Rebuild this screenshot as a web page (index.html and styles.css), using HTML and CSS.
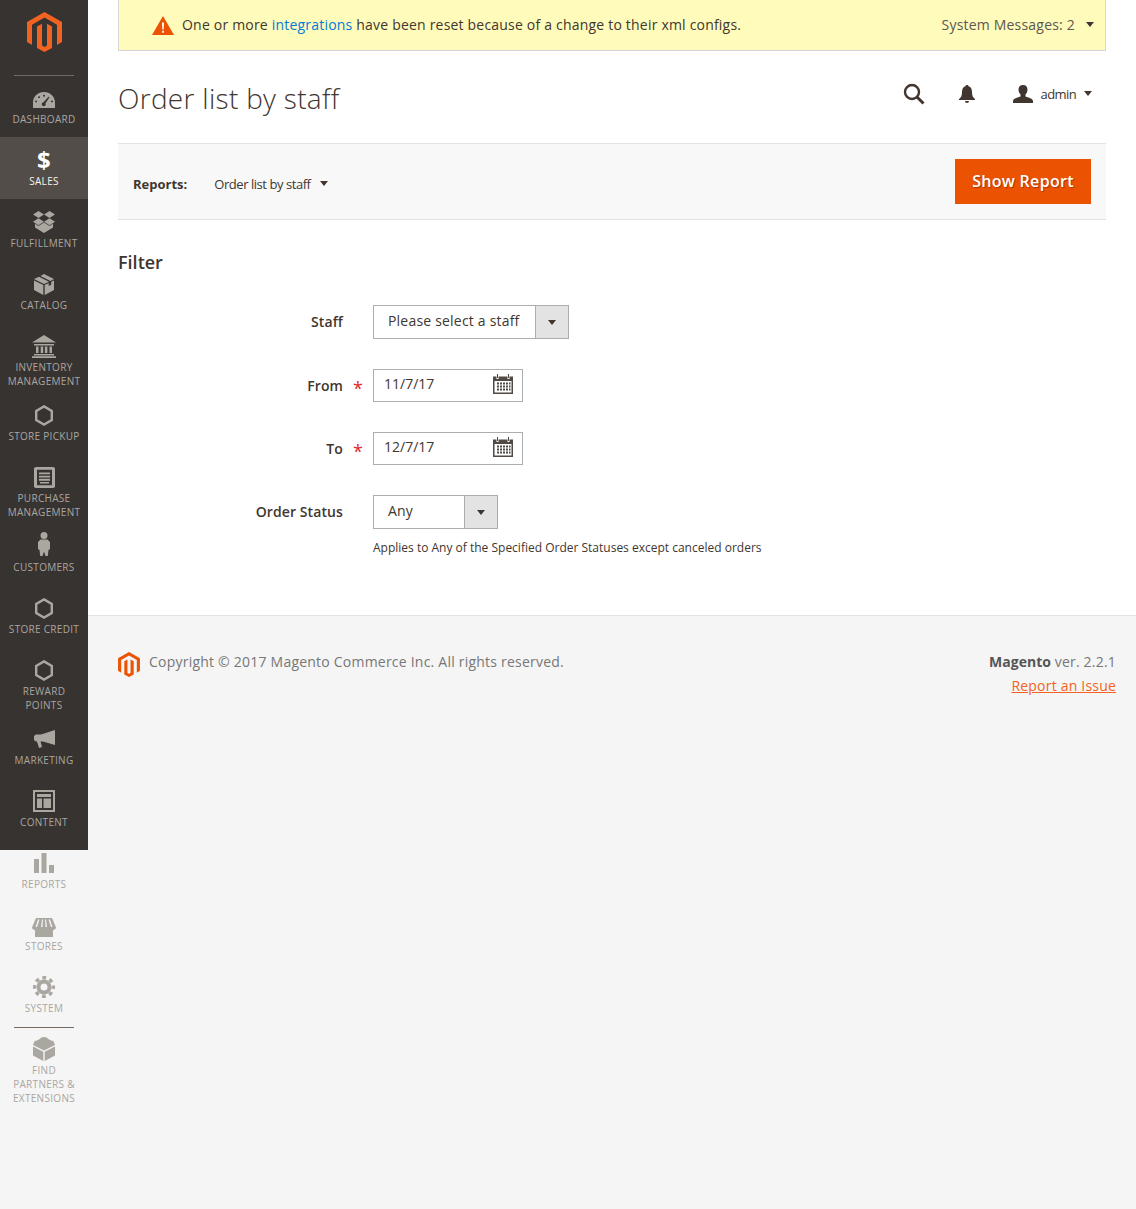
FILE: index.html
```html
<!DOCTYPE html>
<html>
<head>
  <title>Order list by staff</title>
  <link rel="stylesheet" href="styles.css">
</head>
<body>
  <div class="page">
    <aside class="sidebar">
      <a class="logo" href="#">
        <svg width="35" height="40" viewBox="0 0 35 40"><path fill="#f26322" d="M17.500 0 35 10v20l-5 3V12.800L17.500 5.600 5 12.800V33l-5-3V10zM10 14.600l5-2.800v21.600l2.500 1.500 2.500-1.500V11.800l5 2.800V36l-7.500 4-7.500-4z"/></svg>
      </a>
      <div class="nav-divider"></div>
      <nav class="nav">
        <a class="nav-item" href="#">
          <span class="nav-icon icon-dashboard"><svg width="22" height="16" viewBox="0 0 22 17" preserveAspectRatio="none"><path fill="currentColor" fill-rule="evenodd" d="M11 0C5 0 0 5 0 11v6h22v-6C22 5 17 0 11 0zM11 3a1 1 0 1 1 0 2 1 1 0 0 1 0-2zM6 4.500a1 1 0 1 1 0 2 1 1 0 0 1 0-2zM3 9a1 1 0 1 1 0 2 1 1 0 0 1 0-2zM19 9a1 1 0 1 1 0 2 1 1 0 0 1 0-2zM15.500 5l1 .7-4 6.300a2 2 0 1 1-2-1z"/></svg></span>
          <span class="nav-label">Dashboard</span>
        </a>
        <a class="nav-item is-active" href="#">
          <span class="nav-icon nav-dollar">$</span>
          <span class="nav-label">Sales</span>
        </a>
        <a class="nav-item" href="#">
          <span class="nav-icon"><svg width="22" height="22" viewBox="0 0 22 23" preserveAspectRatio="none"><path fill="currentColor" d="M5.500 0 11 3.600 5.500 7.200 0 3.600zM16.500 0 22 3.600l-5.500 3.600L11 3.600zM5.500 7.600 11 11.200l-5.500 3.600L0 11.200zM16.500 7.600l5.500 3.600-5.500 3.600-5.500-3.600zM11 12l5.500 3.600 3.500-2.200v3.800L11 23l-9-5.800v-3.800l3.500 2.200z"/></svg></span>
          <span class="nav-label">Fulfillment</span>
        </a>
        <a class="nav-item" href="#">
          <span class="nav-icon"><svg width="20" height="21" viewBox="0 0 20 21"><path fill="currentColor" d="M10 0 20 5 16.500 7 6.500 2zM5 2.800 15 7.800 10 10 0 5zM0 6.500 9.300 11v10L0 16zM20 6.500V16l-9.300 5V11l4-2v3l2.500-1.300v-3z"/></svg></span>
          <span class="nav-label">Catalog</span>
        </a>
        <a class="nav-item" href="#">
          <span class="nav-icon"><svg width="24" height="23" viewBox="0 0 24 23"><path fill="currentColor" d="M12 0 24 7.500H0zM2 9h20v1.500H2zM4 11.500h2.500V18H4zM8.700 11.500h2.500V18H8.700zM12.900 11.500h2.500V18h-2.500zM17.500 11.500H20V18h-2.500zM2 19h20v1.500H2zM0 21.200h24V23H0z"/></svg></span>
          <span class="nav-label">Inventory<br>Management</span>
        </a>
        <a class="nav-item" href="#">
          <span class="nav-icon"><svg width="18" height="21" viewBox="0 0 18 21"><path fill="none" stroke="currentColor" stroke-width="2.400" d="M9 1.400 16.800 5.900v9.200L9 19.600 1.200 15.100V5.900z"/></svg></span>
          <span class="nav-label">Store Pickup</span>
        </a>
        <a class="nav-item" href="#">
          <span class="nav-icon"><svg width="21" height="21" viewBox="0 0 21 23" preserveAspectRatio="none"><path fill="currentColor" fill-rule="evenodd" d="M2 0h17a2 2 0 0 1 2 2v19a2 2 0 0 1-2 2H2a2 2 0 0 1-2-2V2a2 2 0 0 1 2-2zM3 3v17h15V3zM5 6h11v2H5zM5 9.500h11v2H5zM5 13h11v2H5zM6 16.500h9v1.500H6z"/></svg></span>
          <span class="nav-label">Purchase<br>Management</span>
        </a>
        <a class="nav-item" href="#">
          <span class="nav-icon icon-customers"><svg width="12" height="24" viewBox="0 0 12 24"><path fill="currentColor" d="M6 0a3.500 3.500 0 1 1 0 7 3.500 3.500 0 0 1 0-7zM2.500 7.500h7L12 10v7l-1.500 1-.7 6H7.500L6 19.500 4.500 24H2.200l-.7-6L0 17v-7z"/></svg></span>
          <span class="nav-label">Customers</span>
        </a>
        <a class="nav-item" href="#">
          <span class="nav-icon"><svg width="18" height="21" viewBox="0 0 18 21"><path fill="none" stroke="currentColor" stroke-width="2.400" d="M9 1.400 16.800 5.900v9.200L9 19.600 1.200 15.100V5.900z"/></svg></span>
          <span class="nav-label">Store Credit</span>
        </a>
        <a class="nav-item" href="#">
          <span class="nav-icon"><svg width="18" height="21" viewBox="0 0 18 21"><path fill="none" stroke="currentColor" stroke-width="2.400" d="M9 1.400 16.800 5.900v9.200L9 19.600 1.200 15.100V5.900z"/></svg></span>
          <span class="nav-label">Reward<br>Points</span>
        </a>
        <a class="nav-item" href="#">
          <span class="nav-icon"><svg width="21" height="18" viewBox="0 0 21 18"><path fill="currentColor" d="M21 0v15L9 11.500H6.500L8 17l-3 1-2-6.500H2L0 10V6l2-1.500h5z"/></svg></span>
          <span class="nav-label">Marketing</span>
        </a>
        <a class="nav-item" href="#">
          <span class="nav-icon"><svg width="22" height="22" viewBox="0 0 22 22"><path fill="currentColor" fill-rule="evenodd" d="M0 0h22v22H0zM2 2v18h18V2zM4 4h14v3H4zM4 8.500h5V18H4zM10.500 8.500H18V18h-7.500z"/></svg></span>
          <span class="nav-label">Content</span>
        </a>
        <a class="nav-item" href="#">
          <span class="nav-icon"><svg width="20" height="20" viewBox="0 0 20 20"><path fill="currentColor" d="M0 6h5v14H0zM7.500 0h5v20h-5zM15 12h5v8h-5z"/></svg></span>
          <span class="nav-label">Reports</span>
        </a>
        <a class="nav-item" href="#">
          <span class="nav-icon icon-stores"><svg width="24" height="19" viewBox="0 0 24 19"><path fill="currentColor" fill-rule="evenodd" d="M4 0h16l4 9.500c0 1.500-1.500 2.500-3 2.500v7H3v-7c-1.500 0-3-1-3-2.500zM6 1.500 3.500 9H5l2.500-7.500zM10 1.500 9 9h1.500l.5-7.500zM13 1.500l.5 7.500H15l-1-7.500zM16.500 1.500 19 9h1.500L18 1.500z"/></svg></span>
          <span class="nav-label">Stores</span>
        </a>
        <a class="nav-item" href="#">
          <span class="nav-icon"><svg width="22" height="22" viewBox="0 0 22 22"><circle cx="11" cy="11" r="5.500" fill="none" stroke="currentColor" stroke-width="4"/><circle cx="11" cy="11" r="9.300" fill="none" stroke="currentColor" stroke-width="3.400" stroke-dasharray="3.700 3.600" stroke-dashoffset="1.850"/></svg></span>
          <span class="nav-label">System</span>
        </a>
        <div class="nav-divider"></div>
        <a class="nav-item" href="#">
          <span class="nav-icon"><svg width="22" height="24" viewBox="0 0 22 24"><path fill="currentColor" d="M11 0c2 0 3.500 .7 3.800 1.800L18 3.500c2 .3 3 1 3 2L22 8 11 13.500 0 8l1-2.500c0-1 1-1.700 3-2l3.200-1.700C7.500 .7 9 0 11 0zM0 9.500l10.300 5.200V24L0 18.500zM22 9.500v9L11.700 24v-9.300z"/></svg></span>
          <span class="nav-label nav-label-long">Find<br>Partners &amp;<br>Extensions</span>
        </a>
      </nav>
    </aside>

    <div class="content">
      <main class="main">
        <div class="message-bar">
          <svg class="warning-icon" width="22" height="19" viewBox="0 0 22 19"><path fill="#eb5202" d="M11 0 22 19H0z"/><path fill="#fff" d="M10 6.500h2l-.3 7h-1.400zM10.100 14.800h1.800v1.900h-1.800z"/></svg>
          <span class="message-text">One or more <a href="#">integrations</a> have been reset because of a change to their xml configs.</span>
          <span class="message-count">System Messages: 2</span>
          <span class="caret message-caret"></span>
        </div>

        <header class="page-header">
          <h1>Order list by staff</h1>
          <div class="header-actions">
            <svg class="search-icon" width="22" height="22" viewBox="0 0 22 22"><circle cx="9" cy="9" r="7" fill="none" stroke="#41362f" stroke-width="2.400"/><path stroke="#41362f" stroke-width="3" d="m14 14 6.500 6.500"/></svg>
            <svg class="bell-icon" width="16" height="18" viewBox="0 0 16 18"><path fill="#41362f" d="M8 0c1 0 1.500.6 1.600 1.300C12 2 13 4 13 7c0 4 1 5.500 3 7v1H0v-1c2-1.500 3-3 3-7 0-3 1-5 3.400-5.700C6.500.6 7 0 8 0zM6 16h4a2 2 0 0 1-4 0z"/></svg>
            <span class="user-menu">
              <svg width="20" height="18" viewBox="0 0 20 18"><path fill="#41362f" d="M10 0c3 0 4.500 2 4.500 4.500 0 2-1 4-2 5v2c3 1 7.500 2 7.500 4.500v2H0v-2c0-2.500 4.500-3.500 7.500-4.500v-2c-1-1-2-3-2-5C5.500 2 7 0 10 0z"/></svg>
              <span class="user-name">admin</span>
              <span class="caret"></span>
            </span>
          </div>
        </header>

        <div class="report-bar">
          <div class="report-switcher">
            <strong class="report-label">Reports:</strong>
            <span class="report-name">Order list by staff</span>
            <span class="caret"></span>
          </div>
          <button class="show-report" type="button">Show Report</button>
        </div>

        <section class="filter">
          <h2>Filter</h2>
          <div class="form-row">
            <label>Staff</label>
            <div class="select select-staff"><span class="select-value">Please select a staff</span><span class="select-arrow"><span class="caret"></span></span></div>
          </div>
          <div class="form-row is-required">
            <label>From</label>
            <div class="date-field"><input type="text" value="11/7/17"><svg width="20" height="20" viewBox="0 0 20 20"><use href="#calendar"/></svg></div>
          </div>
          <div class="form-row is-required">
            <label>To</label>
            <div class="date-field"><input type="text" value="12/7/17"><svg width="20" height="20" viewBox="0 0 20 20"><use href="#calendar"/></svg></div>
          </div>
          <div class="form-row">
            <label>Order Status</label>
            <div class="select select-status"><span class="select-value">Any</span><span class="select-arrow"><span class="caret"></span></span></div>
          </div>
          <p class="form-note">Applies to Any of the Specified Order Statuses except canceled orders</p>
        </section>
      </main>

      <footer class="footer">
        <div class="copyright">
          <svg width="22" height="25" viewBox="0 0 35 40"><path fill="#eb5202" d="M17.500 0 35 10v20l-5 3V12.800L17.500 5.600 5 12.800V33l-5-3V10zM10 14.600l5-2.800v21.600l2.500 1.500 2.500-1.500V11.800l5 2.800V36l-7.500 4-7.500-4z"/></svg>
          <span class="copyright-text">Copyright © 2017 Magento Commerce Inc. All rights reserved.</span>
        </div>
        <div class="version">
          <div><strong>Magento</strong> ver. 2.2.1</div>
          <a href="#">Report an Issue</a>
        </div>
      </footer>
    </div>
  </div>

  <svg class="sprites" width="0" height="0">
    <symbol id="calendar" viewBox="0 0 20 20">
      <path fill="#514943" fill-rule="evenodd" d="M0 2.500h3.500V5h2V2.500h9V5h2V2.500H20V20H0zM1.500 7v11.500h17V7zM4 0h1v4H4zM15 0h1v4h-1z"/>
      <path fill="#514943" d="M4 8.500h2v2H4zM7 8.500h2v2H7zM10 8.500h2v2h-2zM13 8.500h2v2h-2zM16 8.500h1.500v2H16zM4 11.500h2v2H4zM7 11.500h2v2H7zM10 11.500h2v2h-2zM13 11.500h2v2h-2zM16 11.500h1.500v2H16zM4 14.500h2v2H4zM7 14.500h2v2H7zM10 14.500h2v2h-2zM13 14.500h2v2h-2zM16 14.500h1.500v2H16z"/>
    </symbol>
  </svg>
</body>
</html>
```

FILE: styles.css
```css
* {
  box-sizing: border-box;
}

body {
  margin: 0;
  background-color: #f5f5f5;
  color: #41362f;
  font-family: "Open Sans", sans-serif;
  font-size: 14px;
  letter-spacing: .2px;
}

a {
  text-decoration: none;
}

.page {
  display: flex;
  align-items: flex-start;
  min-height: 1209px;
}

/* sidebar */
.sidebar {
  flex: none;
  width: 88px;
  height: 850px;
  background-color: #373330;
}

.logo {
  display: flex;
  justify-content: center;
  height: 75px;
  padding-top: 12px;
}

.nav-divider {
  height: 1px;
  margin: 0 14px -1px;
  background-color: #736963;
  position: relative;
}

.nav .nav-divider {
  margin-top: 1px;
  margin-bottom: -2px;
}

.nav-item {
  display: block;
  padding: 12px 4px 4px;
  color: #aaa6a0;
  text-align: center;
}

.nav-item.is-active {
  background-color: #524d49;
  color: #f7f3eb;
}

.nav-icon {
  display: flex;
  align-items: center;
  justify-content: center;
  height: 24px;
  margin-top: -1px;
  margin-bottom: 3px;
}

.icon-dashboard svg {
  margin-top: 3px;
}

.icon-customers svg {
  margin-bottom: 4px;
}

.icon-stores svg {
  margin-top: 4px;
}

.nav-dollar {
  height: 22px;
  margin-top: 0;
  margin-bottom: 4px;
  font-size: 24px;
  font-weight: 700;
  line-height: 22px;
  color: #fff;
}

.nav-label {
  display: block;
  min-height: 20px;
  font-size: 10px;
  line-height: 13.500px;
  letter-spacing: .3px;
  text-transform: uppercase;
}

.nav-label-long {
  margin-top: -1px;
  line-height: 14px;
}

/* system message */
.message-bar {
  display: flex;
  align-items: center;
  height: 51px;
  padding: 0 11px 2px 33px;
  background-color: #fffbbb;
  border: 1px solid #d6d6d6;
  border-top: 0;
}

.warning-icon {
  margin-right: 8px;
  margin-top: 2px;
}

.message-text {
  flex: 1;
  color: #41362f;
}

.message-text a {
  color: #007bdb;
}

.message-count {
  color: #5c5750;
}

.message-caret {
  margin-left: 11px;
}

.caret {
  display: inline-block;
  width: 0;
  height: 0;
  border-top: 5px solid #41362f;
  border-left: 4px solid transparent;
  border-right: 4px solid transparent;
}

.main {
  padding: 0 30px 59px;
  background-color: #fff;
  border-bottom: 1px solid #e3e3e3;
}

.content {
  flex: 1;
  min-width: 0;
}

/* page header */
.page-header {
  display: flex;
  justify-content: space-between;
  height: 92px;
}

.page-header h1 {
  margin: 28px 0 0;
  font-size: 28px;
  font-weight: 300;
  line-height: 38px;
  letter-spacing: .3px;
  color: #41362f;
}

.header-actions {
  display: flex;
  align-items: center;
  height: 85px;
  padding-right: 14px;
}

.bell-icon {
  margin-left: 34px;
}

.user-menu {
  display: flex;
  align-items: center;
  margin-left: 38px;
}

.user-name {
  margin: 0 8px 0 8px;
  font-size: 13px;
  letter-spacing: -.6px;
}

/* report switcher */
.report-bar {
  display: flex;
  align-items: center;
  justify-content: space-between;
  height: 77px;
  padding: 0 15px;
  background-color: #f8f8f8;
  border-top: 1px solid #e3e3e3;
  border-bottom: 1px solid #e3e3e3;
}

.report-switcher {
  display: flex;
  align-items: center;
  padding-top: 4px;
  font-size: 13px;
  letter-spacing: 0;
}

.report-label {
  margin-right: 27px;
}

.report-name {
  letter-spacing: -.45px;
  margin-right: 9px;
}

.show-report {
  width: 136px;
  height: 45px;
  padding: 0 0 2px;
  border: 0;
  background-color: #eb5202;
  color: #fff;
  font-family: "Open Sans", sans-serif;
  font-size: 16px;
  font-weight: 600;
  letter-spacing: .3px;
  text-shadow: 1px 1px 1px rgba(0, 0, 0, .3);
}

/* filter form */
.filter h2 {
  margin: 30px 0 30px;
  font-size: 18px;
  font-weight: 600;
  line-height: 25px;
  letter-spacing: 0;
  color: #41362f;
}

.form-row {
  display: flex;
  align-items: center;
  margin-bottom: 30px;
}

.form-row label {
  position: relative;
  width: 225px;
  margin-right: 30px;
  margin-bottom: 2px;
  font-weight: 600;
  letter-spacing: .1px;
  text-align: right;
  color: #41362f;
}

.form-row.is-required label {
  margin-bottom: 0;
}

.form-row.is-required label::after {
  content: "*";
  position: absolute;
  left: 235px;
  top: 0;
  color: #e22626;
  font-size: 18px;
  font-weight: 400;
}

.select {
  display: flex;
  height: 34px;
  background-color: #fff;
  border: 1px solid #adadad;
}

.select-staff {
  width: 196px;
}

.select-status {
  width: 125px;
}

.select-value {
  flex: 1;
  padding-left: 14px;
  line-height: 30px;
  color: #41362f;
}

.select-arrow {
  display: flex;
  align-items: center;
  justify-content: center;
  width: 33px;
  background-color: #e3e3e3;
  border-left: 1px solid #adadad;
}

.date-field {
  display: flex;
  align-items: center;
  width: 150px;
  height: 33px;
  padding-right: 9px;
  border: 1px solid #adadad;
  background-color: #fff;
}

.date-field svg {
  margin-bottom: 3px;
}

.date-field input {
  flex: 1;
  min-width: 0;
  padding: 0 0 4px 10px;
  border: 0;
  outline: 0;
  background: none;
  color: #41362f;
  font-family: "Open Sans", sans-serif;
  font-size: 14px;
  letter-spacing: 0;
}

.form-note {
  margin: -20px 0 0 255px;
  font-size: 12px;
  line-height: 17px;
  letter-spacing: 0;
  color: #41362f;
}

.sprites {
  display: block;
}

/* footer */
.footer {
  display: flex;
  justify-content: space-between;
  padding: 36px 20px 0 30px;
  color: #777;
}

.copyright {
  display: flex;
  align-items: center;
  gap: 9px;
  height: 25px;
}

.copyright-text {
  margin-bottom: 7px;
  letter-spacing: .22px;
}

.version {
  text-align: right;
  line-height: 24px;
  margin-top: -2px;
}

.version strong {
  color: #555;
  letter-spacing: 0;
}

.version a {
  color: #f26322;
  text-decoration: underline;
}
```
